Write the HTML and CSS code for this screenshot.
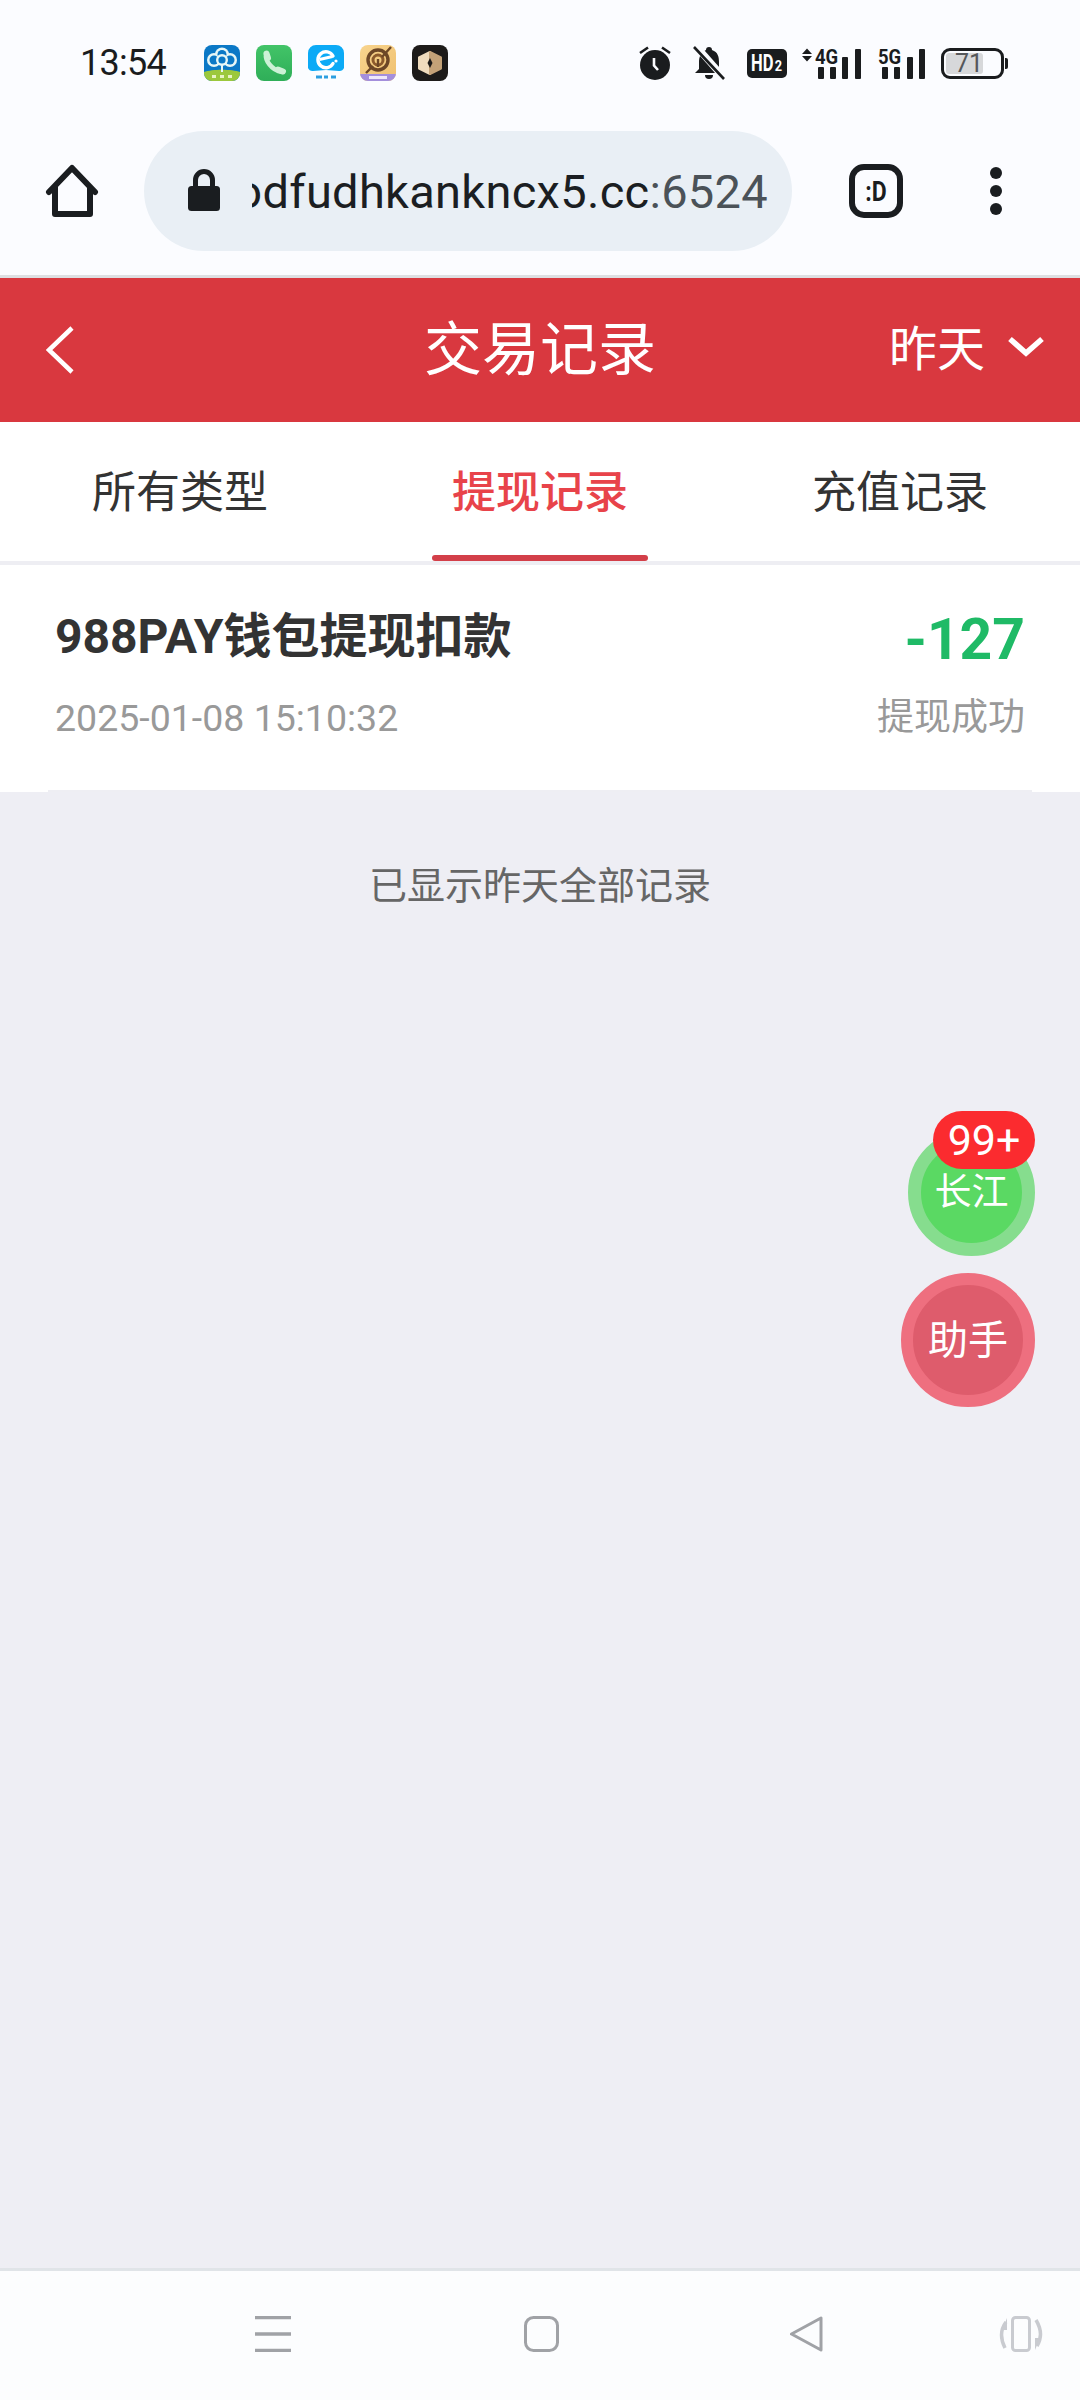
FILE: index.html
```html
<!DOCTYPE html>
<html lang="zh-CN">

<head>
<title>交易记录</title>
<meta charset="UTF-8">
<link rel="stylesheet" href="styles.css">
</head>

<body>
	<div id="phone">
		<div class="statusbar">
			<span class="clock">13:54</span>
			<div class="apps">
				<svg width="36" height="36" viewBox="0 0 36 36">
					<rect width="36" height="36" rx="8" fill="#0b78c6"/>
					<path d="M0 27C8 24 28 24 36 27V28a8 8 0 0 1-8 8H8a8 8 0 0 1-8-8Z" fill="#9cc83c"/>
					<path d="M18 19V27" stroke="#e6f6f6" stroke-width="2"/>
					<g fill="#e6f6f6"><circle cx="18" cy="9.500" r="7"/><circle cx="10" cy="15" r="7"/><circle cx="26" cy="15" r="7"/></g>
					<g fill="#0b78c6"><circle cx="18" cy="9.500" r="4.500"/><circle cx="10" cy="15" r="4.500"/><circle cx="26" cy="15" r="4.500"/></g>
					<circle cx="18" cy="15" r="4.800" fill="#0b78c6" stroke="#e6f6f6" stroke-width="2.400"/>
					<path d="M8 31.500H12M16 31.500H20M24 31.500H28" stroke="#e8f3c4" stroke-width="3"/>
				</svg>
				<svg width="36" height="36" viewBox="0 0 36 36">
					<defs><linearGradient id="callbg" x1="0" y1="0" x2="0" y2="1"><stop offset="0" stop-color="#42c468"/><stop offset="1" stop-color="#2fae58"/></linearGradient></defs>
					<rect width="36" height="36" rx="8" fill="url(#callbg)"/>
					<path d="M10 9C9 15 15 25 26 27" fill="none" stroke="#cdf1d6" stroke-width="4.500" stroke-linecap="round"/>
					<path d="M10.500 8.500L12 13M22 24.500L27 26.500" stroke="#cdf1d6" stroke-width="6" stroke-linecap="round"/>
				</svg>
				<svg width="36" height="36" viewBox="0 0 36 36">
					<rect width="36" height="36" rx="8" fill="#fbfdff"/>
					<path d="M0 8a8 8 0 0 1 8-8H28a8 8 0 0 1 8 8V23a5 5 0 0 1-5 3L18 25 5 26a5 5 0 0 1-5-3Z" fill="#0caaf6"/>
					<path d="M25 11a8 8 0 1 0 0 7.500" fill="none" stroke="#fff" stroke-width="3.400" stroke-linecap="round"/>
					<path d="M11.500 14.500L24.500 11.500" stroke="#fff" stroke-width="3"/>
					<circle cx="28" cy="16" r="1.600" fill="#fff"/>
					<path d="M8 32H14M16 32H20M23 32H28" stroke="#2d9fe0" stroke-width="3"/>
				</svg>
				<svg width="36" height="36" viewBox="0 0 36 36">
					<defs><linearGradient id="gamebg" x1="0" y1="0" x2="1" y2="1"><stop offset="0" stop-color="#f8d48e"/><stop offset="1" stop-color="#efc070"/></linearGradient></defs>
					<rect width="36" height="36" rx="8" fill="url(#gamebg)"/>
					<path d="M0 29H36V28a8 8 0 0 1-8 8H8a8 8 0 0 1-8-8Z" fill="#a48fdc"/>
					<circle cx="18" cy="15" r="10" fill="none" stroke="#6d4727" stroke-width="3.400"/>
					<circle cx="18" cy="15" r="5" fill="none" stroke="#8c5a2c" stroke-width="3"/>
					<path d="M18 14V22" stroke="#6d4727" stroke-width="2.400"/>
					<path d="M31 2L22 12M6 28L13 21" stroke="#6d4727" stroke-width="2.400"/>
					<path d="M9 32.500H27" stroke="#efe8fb" stroke-width="3"/>
				</svg>
				<svg width="36" height="36" viewBox="0 0 36 36">
					<rect width="36" height="36" rx="8" fill="#1d1b1a"/>
					<path d="M18 7L7 12.500V23.500L18 29Z" fill="#f0dcbe" stroke="#f0dcbe" stroke-width="2" stroke-linejoin="round"/>
					<path d="M18 7L29 12.500V23.500L18 29Z" fill="#c4a278" stroke="#c4a278" stroke-width="2" stroke-linejoin="round"/>
					<path d="M18 13L20.500 18L18 23L15.500 18Z" fill="#1d1b1a"/>
				</svg>
			</div>
			<div class="indicators">
				<svg class="ind-alarm" width="32" height="34" viewBox="0 0 32 34">
					<circle cx="16" cy="19" r="15" fill="#1a1c1e"/>
					<path d="M1 7L9 1.500M31 7L23 1.500" stroke="#1a1c1e" stroke-width="2.600"/>
					<path d="M15 12V19.500L19 24" fill="none" stroke="#fbfcff" stroke-width="2.600"/>
				</svg>
				<svg class="ind-bell" width="32" height="34" viewBox="0 0 32 34">
					<path d="M16 1a3 3 0 0 1 3 3C25 6 26 11 26 16V22L30 27H2L6 23V16C6 11 8 6 13 4a3 3 0 0 1 3-3Z" fill="#1a1c1e"/>
					<path d="M12 29H20a4 4 0 0 1-8 0Z" fill="#1a1c1e"/>
					<path d="M2 -1L32 33" stroke="#fbfcff" stroke-width="7"/>
					<path d="M1 1L31 33" stroke="#1a1c1e" stroke-width="2.600"/>
				</svg>
				<div class="hdchip"><span class="hd">HD</span><span class="hd-sub">2</span></div>
				<div class="signal ind-4g">
					<svg width="60" height="31" viewBox="0 0 60 31">
						<path d="M1 6L6 0.500L11 6ZM1 8H11L6 13.500Z" fill="#1a1c1e"/>
						<rect x="17" y="19" width="6" height="12" rx="1" fill="#1a1c1e"/>
						<rect x="29" y="19" width="6" height="12" rx="1" fill="#1a1c1e"/>
						<rect x="41" y="9" width="6" height="22" rx="1" fill="#1a1c1e"/>
						<rect x="54" y="1" width="6" height="30" rx="1" fill="#1a1c1e"/>
					</svg>
					<span class="signal-label">4G</span>
				</div>
				<div class="signal ind-5g">
					<svg width="47" height="31" viewBox="0 0 47 31">
						<rect x="4" y="19" width="6" height="12" rx="1" fill="#1a1c1e"/>
						<rect x="16" y="19" width="6" height="12" rx="1" fill="#1a1c1e"/>
						<rect x="29" y="9" width="6" height="22" rx="1" fill="#1a1c1e"/>
						<rect x="41" y="1" width="6" height="30" rx="1" fill="#1a1c1e"/>
					</svg>
					<span class="signal-label">5G</span>
				</div>
				<div class="battery"><div class="battery-fill">71</div></div>
				<div class="battery-tip"></div>
			</div>
		</div>

		<div class="toolbar">
			<svg class="home" width="54" height="54" viewBox="0 0 54 54">
				<path d="M4 28L27 4L50 28M10 23V50H45V23" fill="none" stroke="#1a1d20" stroke-width="6" stroke-linecap="round" stroke-linejoin="round"/>
			</svg>
			<div class="urlbar">
				<svg class="lock" width="32" height="42" viewBox="0 0 32 42">
					<rect y="17" width="32" height="25" rx="3.500" fill="#1a1d20"/>
					<path d="M7.500 20V11a8.500 8.500 0 0 1 17 0V20" fill="none" stroke="#1a1d20" stroke-width="5"/>
				</svg>
				<div class="url"><span>odfudhkankncx5.cc<i>:6524</i></span></div>
			</div>
			<div class="tabcount"><span>:D</span></div>
			<div class="dots"><b></b><b></b><b></b></div>
		</div>

		<header class="pagehead">
			<div class="head-left">
				<svg width="28" height="48" viewBox="0 0 28 48"><path d="M26 2L3 24L26 46" fill="none" stroke="#fff" stroke-width="4.500"/></svg>
			</div>
			<h1>交易记录</h1>
			<div class="head-right">
				<span>昨天</span>
				<svg width="38" height="21" viewBox="0 0 38 21"><path d="M3 3L19 17L35 3" fill="none" stroke="#fff" stroke-width="5.500"/></svg>
			</div>
		</header>

		<nav class="tabs">
			<div class="tab">所有类型</div>
			<div class="tab active">提现记录</div>
			<div class="tab">充值记录</div>
		</nav>

		<main class="content">
			<div class="record">
				<div class="record-inner">
					<div>
						<div class="record-title">988PAY钱包提现扣款</div>
						<div class="record-date">2025-01-08 15:10:32</div>
					</div>
					<div class="record-side">
						<div class="record-amount">-127</div>
						<div class="record-state">提现成功</div>
					</div>
				</div>
			</div>
			<p class="endnote">已显示昨天全部记录</p>

			<div class="float float-green"><span>长江</span></div>
			<div class="badge">99+</div>
			<div class="float float-red"><span>助手</span></div>
		</main>

		<div class="navbar">
			<svg class="nav-menu" width="36" height="36" viewBox="0 0 36 36"><path d="M0 1.500H36M0 18H36M0 34.500H36" stroke="#a0a2a6" stroke-width="3.400"/></svg>
			<svg class="nav-home" width="35" height="36" viewBox="0 0 35 36"><rect x="1.500" y="1.500" width="32" height="33" rx="8" fill="none" stroke="#a0a2a6" stroke-width="3"/></svg>
			<svg class="nav-back" width="36" height="36" viewBox="0 0 36 36"><path d="M2.500 18L32 2V34Z" fill="none" stroke="#a0a2a6" stroke-width="3" stroke-linejoin="round"/></svg>
			<svg class="nav-rotate" width="46" height="36" viewBox="0 0 46 36">
				<rect x="14.500" y="1.500" width="17" height="33" rx="3" fill="none" stroke="#c9cbd0" stroke-width="3"/>
				<path d="M8 6C2 14 2 22 7 32" fill="none" stroke="#c9cbd0" stroke-width="3.500"/>
				<path d="M38 4C44 14 44 22 39 30" fill="none" stroke="#c9cbd0" stroke-width="3.500"/>
				<path d="M9 2V14H4ZM37 34V22H42Z" fill="#c9cbd0"/>
			</svg>
		</div>
	</div>
</body>
</html>
```

FILE: styles.css
```css
* {
	box-sizing: border-box;
}

body {
	margin: 0;
	background: #eeeef4;
	font-family: Roboto, "Noto Sans CJK SC", sans-serif;
}

#phone {
	width: 1080px;
	height: 2400px;
	display: flex;
	flex-direction: column;
	overflow: hidden;
}

/* system status bar */
.statusbar {
	height: 126px;
	padding: 0 72px 0 80px;
	background: #fbfcff;
	display: flex;
	align-items: center;
}

.clock {
	width: 124px;
	font-size: 36px;
	letter-spacing: -0.7px;
	color: #1a1c1e;
}

.apps {
	display: flex;
	gap: 16px;
}

.indicators {
	margin-left: auto;
	display: flex;
	align-items: center;
}

.ind-bell { margin-left: 22px; }
.ind-4g { margin-left: 14px; }
.ind-5g { margin-left: 17px; }

.hdchip {
	margin-left: 22px;
	width: 40px;
	height: 29px;
	padding-left: 4px;
	border-radius: 5px;
	background: #1a1c1e;
	color: #fff;
	font-weight: 700;
	display: flex;
	align-items: center;
}

.hd {
	width: 23px;
	font-size: 23px;
	transform: scaleX(0.72);
	transform-origin: left;
}

.hd-sub {
	font-size: 15px;
	margin-top: 6px;
	transform: scaleX(0.85);
}

/* the label sits in the same grid cell as the bars */
.signal {
	display: grid;
}

.signal > * {
	grid-area: 1 / 1;
}

.signal-label {
	font-size: 21px;
	font-weight: 700;
	line-height: 18px;
	height: 18px;
	color: #1a1c1e;
	transform: scaleX(0.88);
	transform-origin: left;
}

.ind-4g .signal-label {
	margin-left: 14px;
}

.battery {
	margin-left: 16px;
	width: 63px;
	height: 31px;
	padding: 2px;
	border: 3px solid #1a1c1e;
	border-radius: 9px;
}

.battery-fill {
	width: 37px;
	height: 21px;
	background: #d7d8da;
	border-radius: 3px;
	text-align: right;
	font-size: 25px;
	line-height: 21px;
	color: #55575a;
}

.battery-tip {
	margin-left: 1px;
	width: 3px;
	height: 11px;
	background: #1a1c1e;
	border-radius: 0 2px 2px 0;
}

/* browser toolbar */
.toolbar {
	height: 152px;
	padding: 5px 0 24px 45px;
	background: #fbfcff;
	border-bottom: 3px solid #dedfe2;
	display: flex;
	align-items: center;
}

.urlbar {
	margin-left: 45px;
	width: 648px;
	height: 120px;
	border-radius: 60px;
	background: #e9eff5;
	padding: 0 24px 0 44px;
	display: flex;
	align-items: center;
}

.lock {
	flex: none;
	margin-top: -2px;
}

.url {
	margin-left: 32px;
	flex: 1;
	min-width: 0;
	overflow: hidden;
	display: flex;
	justify-content: flex-end;
	font-size: 47px;
	letter-spacing: 0.3px;
	color: #1b1e22;
	white-space: nowrap;
}

.url i {
	font-style: normal;
	color: #4b5258;
}

.tabcount {
	margin-left: 57px;
	width: 54px;
	height: 54px;
	border: 6px solid #1a1d20;
	border-radius: 15px;
	display: flex;
	align-items: center;
	justify-content: center;
	font-size: 28px;
	font-weight: 700;
	color: #1a1d20;
}

.tabcount span {
	transform: scaleX(0.82);
}

.dots {
	margin-left: 87px;
	display: flex;
	flex-direction: column;
	gap: 6px;
}

.dots b {
	display: block;
	width: 12px;
	height: 12px;
	border-radius: 50%;
	background: #1a1d20;
}

/* page header */
.pagehead {
	height: 144px;
	background: #d9383f;
	color: #fff;
	display: grid;
	grid-template-columns: 1fr auto 1fr;
	align-items: center;
}

.pagehead h1 {
	margin: -10px 0 0;
	font-size: 58px;
	font-weight: 400;
}

.head-left {
	padding-left: 46px;
	display: flex;
}

.head-right {
	padding-right: 35px;
	display: flex;
	justify-content: flex-end;
	align-items: center;
	gap: 22px;
	font-size: 48px;
}

.head-right span {
	margin-top: -10px;
}

.head-right svg {
	margin-top: -8px;
}

/* tabs */
.tabs {
	height: 143px;
	background: #fff;
	border-bottom: 4px solid #eeeef3;
	display: grid;
	grid-template-columns: repeat(3, 1fr);
}

.tab {
	position: relative;
	padding-bottom: 6px;
	display: flex;
	align-items: center;
	justify-content: center;
	font-size: 44px;
	color: #333;
}

.tab.active {
	color: #e8434a;
	font-weight: 500;
}

.tab.active::after {
	content: "";
	position: absolute;
	bottom: 0;
	left: 72px;
	right: 72px;
	height: 6px;
	border-radius: 3px;
	background: #d33f49;
}

/* records */
.content {
	position: relative;
	flex: 1;
	background: #eeeef4;
}

.record {
	background: #fff;
	padding: 0 48px;
}

.record-inner {
	height: 227px;
	padding: 44px 7px 0 7px;
	border-bottom: 2px solid #eeeef3;
	display: flex;
	justify-content: space-between;
}

.record-title {
	font-size: 48px;
	line-height: 56px;
	font-weight: 700;
	color: #333;
}

.record-date {
	margin-top: 31px;
	font-size: 37.5px;
	line-height: 44px;
	color: #999;
}

.record-side {
	text-align: right;
}

.record-amount {
	margin-top: 3px;
	font-size: 57px;
	line-height: 56px;
	font-weight: 700;
	color: #1fba66;
}

.record-state {
	margin-top: 28px;
	font-size: 37px;
	line-height: 44px;
	color: #999;
}

.endnote {
	margin: 72px 0 0;
	text-align: center;
	font-size: 38px;
	line-height: 44px;
	color: #666;
}

/* floating buttons */
.float {
	position: absolute;
	border-radius: 50%;
	display: flex;
	align-items: center;
	justify-content: center;
	color: #fff;
}

.float span {
	margin-top: -7px;
}

.float-green {
	left: 908px;
	top: 564px;
	width: 127px;
	height: 127px;
	background: #5ad963;
	border: 13px solid #86dd8e;
	font-size: 37px;
}

.float-red {
	left: 901px;
	top: 708px;
	width: 134px;
	height: 134px;
	background: #de5c6c;
	border: 12px solid #ee6f7f;
	font-size: 40px;
}

.badge {
	position: absolute;
	left: 933px;
	top: 546px;
	width: 102px;
	height: 58px;
	border-radius: 29px;
	background: #fb2b2f;
	color: #fff;
	font-size: 43px;
	line-height: 58px;
	text-align: center;
}

/* system navigation bar */
.navbar {
	height: 132px;
	padding: 45px 0 0 255px;
	background: #fcfdfe;
	border-top: 3px solid #e0e4e8;
	display: flex;
	align-items: flex-start;
}

.nav-home { margin-left: 233px; }
.nav-back { margin-left: 230px; }
.nav-rotate { margin-left: 173px; }
```
